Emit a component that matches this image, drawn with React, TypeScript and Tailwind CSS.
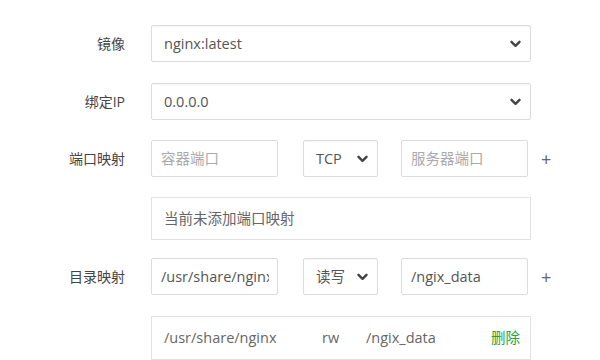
import React from 'react';

const font = { fontFamily: '"Open Sans", "Noto Sans CJK SC", sans-serif' };

const Chevron: React.FC = () => (
  <svg width="11" height="8" viewBox="0 0 11 8" className="shrink-0">
    <polyline points="1.5,1.8 5.5,5.8 9.5,1.8" fill="none" stroke="#444" strokeWidth="2.4" strokeLinecap="round" strokeLinejoin="round" />
  </svg>
);

const Label: React.FC<{ text: string }> = ({ text }) => (
  <div className="w-[125px] shrink-0 text-right text-[14px] text-[#444]">{text}</div>
);

const Select: React.FC<{ value: string; width: string }> = ({ value, width }) => (
  <div className={`${width} h-[37px] flex items-center justify-between pl-3 pr-[9px] bg-white border border-[#dcdcdc] rounded-[2px] shadow-[inset_0_1px_1px_rgba(0,0,0,0.04)] text-[14.5px] text-[#555]`}>
    <span>{value}</span>
    <Chevron />
  </div>
);

const Field: React.FC<{ value?: string; placeholder?: string }> = ({ value, placeholder }) => (
  <input
    readOnly
    value={value ?? ''}
    placeholder={placeholder}
    className="w-[127px] h-[37px] pl-[9px] pr-2 bg-white border border-[#dcdcdc] rounded-[2px] text-[14.5px] text-[#555] placeholder:text-[#aaa] outline-none"
    style={font}
  />
);

const MapRow: React.FC<{ label: string; left: React.ReactNode; mid: string; right: React.ReactNode }> = ({ label, left, mid, right }) => (
  <div className="flex items-center">
    <Label text={label} />
    <div className="ml-[26px] flex items-center">
      {left}
      <div className="ml-[25px]">
        <Select value={mid} width="w-[75px]" />
      </div>
      <div className="ml-[23px]">{right}</div>
      <span className="ml-[13px] text-[18px] leading-none text-[#666]">+</span>
    </div>
  </div>
);

const App: React.FC = () => {
  return (
    <div className="w-[600px] h-[360px] overflow-hidden bg-white pt-[25px]" style={font}>
      <div className="flex items-center">
        <Label text="镜像" />
        <div className="ml-[26px]">
          <Select value="nginx:latest" width="w-[380px]" />
        </div>
      </div>

      <div className="flex items-center mt-[21px]">
        <Label text="绑定IP" />
        <div className="ml-[26px]">
          <Select value="0.0.0.0" width="w-[380px]" />
        </div>
      </div>

      <div className="mt-[20px]">
        <MapRow label="端口映射" left={<Field placeholder="容器端口" />} mid="TCP" right={<Field placeholder="服务器端口" />} />
      </div>

      <div className="ml-[151px] mt-[20px] w-[380px] h-[43px] flex items-center px-3 border border-[#e2e2e2] text-[14.5px] text-[#666]">
        当前未添加端口映射
      </div>

      <div className="mt-[18px]">
        <MapRow label="目录映射" left={<Field value="/usr/share/nginx" />} mid="读写" right={<Field value="/ngix_data" />} />
      </div>

      <div className="ml-[151px] mt-[21px] w-[380px] h-[44px] flex items-center pl-3 pr-[10px] border border-[#e2e2e2] text-[14.5px] text-[#666]">
        <span className="w-[158px]">/usr/share/nginx</span>
        <span className="w-[44px]">rw</span>
        <span className="flex-1">/ngix_data</span>
        <span className="text-[#20a53a]">删除</span>
      </div>
    </div>
  );
};

export default App;
